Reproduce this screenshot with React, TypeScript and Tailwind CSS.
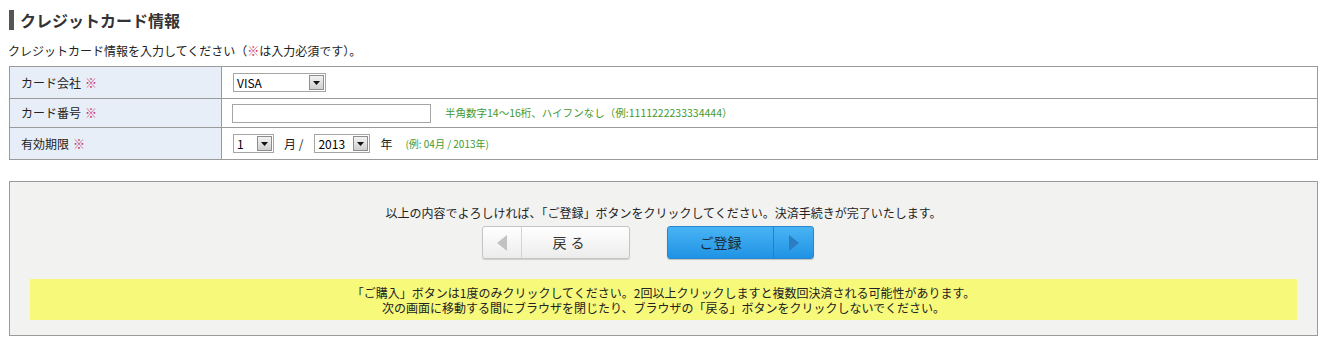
import React from "react";

const font = { fontFamily: '"Noto Sans CJK JP", "Liberation Sans", sans-serif' };

function Select({ value, width }: { value: string; width: string }) {
    return (
        <div className={`flex h-[19px] items-center border border-[#a5a5a5] bg-white ${width}`}>
            <span className="flex-1 pl-[3px] text-[12px] leading-none text-black">{value}</span>
            <span className="mr-[1px] flex h-[15px] w-[15px] items-center justify-center border border-[#8e8e8e] bg-gradient-to-b from-[#f2f2f2] to-[#cfcfcf]">
                <svg width="7" height="4" viewBox="0 0 7 4">
                    <path d="M0 0h7L3.5 4z" fill="#111" />
                </svg>
            </span>
        </div>
    );
}

function Req() {
    return <span className="ml-[4px] text-[#c8326e]">※</span>;
}

export default function App() {
    return (
        <div className="min-h-[345px] w-[1328px] bg-white pl-[9px] pr-[10px] pt-[10px] text-[#222]" style={font}>
            <h2 className="flex h-[20px] items-center gap-[6px] text-[16px] font-bold leading-none text-[#333]">
                <span className="h-[20px] w-[5px] bg-[#555]" />
                クレジットカード情報
            </h2>

            <p className="mt-[14px] -ml-[1px] text-[12px] leading-[14px]">
                クレジットカード情報を入力してください（<span className="text-[#c8326e]">※</span>は入力必須です）。
            </p>

            <table className="mt-[8px] w-full border-collapse text-[12px]">
                <tbody>
                    <tr className="h-[32px]">
                        <th className="w-[212px] border border-[#9a9a9a] bg-[#e7eef8] pl-[11px] text-left font-normal">
                            カード会社<Req />
                        </th>
                        <td className="border border-[#9a9a9a] pl-[11px]">
                            <Select value="VISA" width="w-[93px]" />
                        </td>
                    </tr>
                    <tr className="h-[29px]">
                        <th className="border border-[#9a9a9a] bg-[#e7eef8] pl-[11px] text-left font-normal">
                            カード番号<Req />
                        </th>
                        <td className="border border-[#9a9a9a] pl-[10px]">
                            <div className="flex items-center gap-[14px]">
                                <div className="h-[19px] w-[199px] border border-[#a5a5a5] bg-white" />
                                <span className="text-[10.5px] text-[#3f9a2f]">
                                    半角数字14～16桁、ハイフンなし（例:1111222233334444）
                                </span>
                            </div>
                        </td>
                    </tr>
                    <tr className="h-[32px]">
                        <th className="border border-[#9a9a9a] bg-[#e7eef8] pl-[11px] text-left font-normal">
                            有効期限<Req />
                        </th>
                        <td className="border border-[#9a9a9a] pl-[11px]">
                            <div className="flex items-center">
                                <Select value="1" width="w-[41px]" />
                                <span className="ml-[10px] mr-[11px] text-[12px]">月 /</span>
                                <Select value="2013" width="w-[56px]" />
                                <span className="ml-[10px] text-[12px]">年</span>
                                <span className="ml-[13px] text-[10px] text-[#3f9a2f]">(例: 04月 / 2013年)</span>
                            </div>
                        </td>
                    </tr>
                </tbody>
            </table>

            <div className="mt-[21px] flex h-[155px] flex-col items-center border border-[#9a9a9a] bg-[#f2f2f1] px-[20px] pt-[24px]">
                <p className="text-[12px] leading-[14px]">
                    以上の内容でよろしければ、「ご登録」ボタンをクリックしてください。決済手続きが完了いたします。
                </p>
                <div className="mt-[6px] mr-[31px] flex gap-[37px]">
                    <button className="flex h-[33px] w-[148px] items-center rounded-[3px] border border-[#c4c4c4] bg-gradient-to-b from-white to-[#ececec] shadow-[0_1px_1px_rgba(0,0,0,0.15)]">
                        <span className="flex h-full w-[39px] items-center justify-center border-r border-[#d4d4d4]">
                            <svg width="10" height="16" viewBox="0 0 10 16">
                                <path d="M10 0v16L0 8z" fill="#c2c2c2" />
                            </svg>
                        </span>
                        <span className="flex-1 pr-[10px] text-[14px] tracking-[4px] text-[#333]">戻る</span>
                    </button>
                    <button className="flex h-[33px] w-[147px] items-center rounded-[3px] border border-[#2a87cf] bg-gradient-to-b from-[#48b4f4] to-[#1e93e4] shadow-[0_1px_1px_rgba(0,0,0,0.2)]">
                        <span className="flex-1 text-[14px] text-[#1a2a3a]">ご登録</span>
                        <span className="flex h-full w-[40px] items-center justify-center border-l border-[#2a7fc2]">
                            <svg width="10" height="16" viewBox="0 0 10 16">
                                <path d="M0 0v16L10 8z" fill="#2c7cc0" />
                            </svg>
                        </span>
                    </button>
                </div>
                <div className="mt-[20px] flex h-[41px] w-full flex-col items-center justify-center bg-[#f7f97b] text-[12px] leading-[15px]">
                    <p>「ご購入」ボタンは1度のみクリックしてください。2回以上クリックしますと複数回決済される可能性があります。</p>
                    <p>次の画面に移動する間にブラウザを閉じたり、ブラウザの「戻る」ボタンをクリックしないでください。</p>
                </div>
            </div>
        </div>
    );
}
